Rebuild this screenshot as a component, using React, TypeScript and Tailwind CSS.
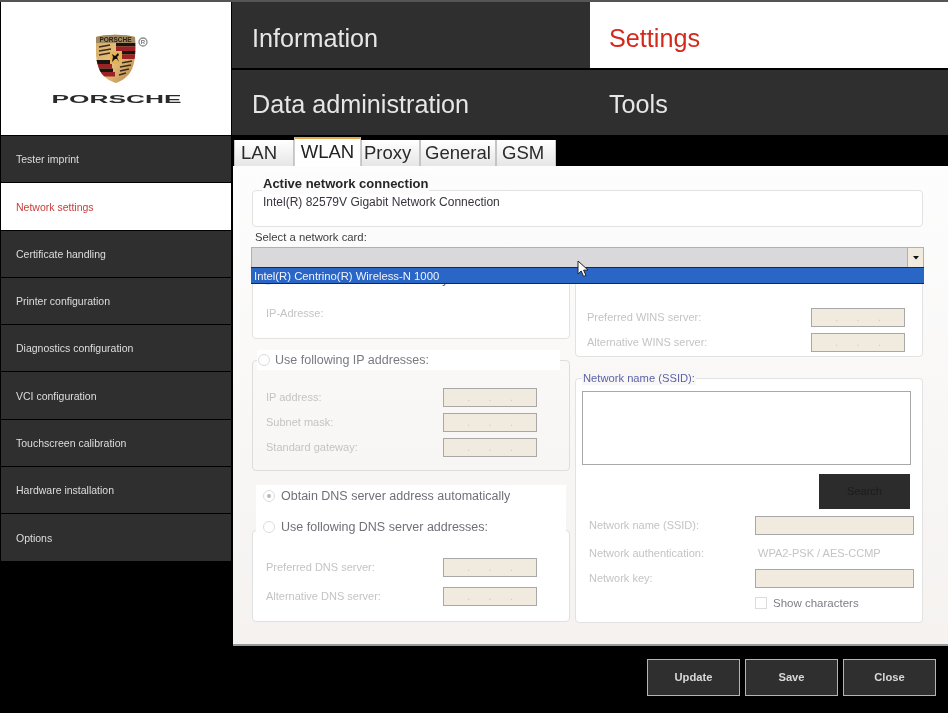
const FONT = "font-['Liberation_Sans',Arial,sans-serif]";

function Crest() {
  return (
    <svg width="60" height="52" viewBox="0 0 60 52" className="block">
      <defs>
        <linearGradient id="gold" x1="0" y1="0" x2="1" y2="1">
          <stop offset="0" stopColor="#d0ac68" />
          <stop offset="0.5" stopColor="#e8c07a" />
          <stop offset="1" stopColor="#b08244" />
        </linearGradient>
        <clipPath id="shield">
          <path d="M0 4 C10 1 29 1 39 4 C40 20 39 30 35 38 C31 45 25 48 20 50 C14 48 8 45 4 38 C0 30 -1 20 0 4 Z" />
        </clipPath>
      </defs>
      <g clipPath="url(#shield)">
        <rect x="-1" width="41" height="52" fill="url(#gold)" />
        <rect x="-1" y="1" width="41" height="9" fill="#a08a64" />
        <text x="19.5" y="8.5" textAnchor="middle" fontSize="6.5" fontWeight="700" fill="#2e2014" fontFamily="Liberation Sans">PORSCHE</text>
        <rect x="20" y="10" width="20" height="3.5" fill="#1c1410" />
        <rect x="20" y="13.5" width="20" height="4.5" fill="#9c2226" />
        <rect x="20" y="18" width="20" height="3.5" fill="#1c1410" />
        <rect x="25" y="21.5" width="15" height="4.5" fill="#9c2226" />
        <rect x="-1" y="27" width="15" height="4" fill="#1c1410" />
        <rect x="-1" y="31" width="17" height="4.5" fill="#9c2226" />
        <rect x="0" y="35.5" width="17" height="3.5" fill="#1c1410" />
        <rect x="2" y="39" width="17" height="4.5" fill="#9c2226" />
        <path d="M3 14 l11 -2 M3 18 l12 -2 M3 22 l11 -2" stroke="#3e2c1a" strokeWidth="1.7" />
        <path d="M25 30 l11 -2 M24 34 l11 -2 M24 38 l9 -2 M23 42 l7 -2" stroke="#3e2c1a" strokeWidth="1.7" />
        <rect x="14" y="18" width="12" height="13" fill="#e4b45a" />
        <path d="M16 29 l1 -5 l-1 -3 l3 2 l3 -3 l1 2 l-2 2 l2 5 l-2 -3 l-2 0 z" fill="#140e06" />
      </g>
      <circle cx="47" cy="9" r="4" fill="#fff" stroke="#8c8c8c" strokeWidth="1.3" />
      <text x="47" y="11.2" textAnchor="middle" fontSize="6" fontWeight="700" fill="#777" fontFamily="Liberation Sans">R</text>
    </svg>
  );
}

function Wordmark() {
  return (
    <svg width="131" height="10" viewBox="0 0 131 10" className="block">
      <text x="0.5" y="9" textLength="130" lengthAdjust="spacingAndGlyphs" fontSize="11" fontWeight="700" fill="#2a2a2a" fontFamily="Liberation Sans">
        PORSCHE
      </text>
    </svg>
  );
}

const menu = [
  "Tester imprint",
  "Network settings",
  "Certificate handling",
  "Printer configuration",
  "Diagnostics configuration",
  "VCI configuration",
  "Touchscreen calibration",
  "Hardware installation",
  "Options",
];

function Sidebar() {
  return (
    <div className="flex flex-col gap-px">
      {menu.map((m) => (
        <div
          key={m}
          className={
            m === "Network settings"
              ? "h-[46.3px] flex items-center pl-[15px] pt-[2px] text-[10.5px] bg-white text-[#c8403c]"
              : "h-[46.3px] flex items-center pl-[15px] pt-[2px] text-[10.5px] bg-[#2f2f2f] text-[#dedede]"
          }
        >
          {m}
        </div>
      ))}
    </div>
  );
}

function TopTile({ label, active, pt, pl }: { label: string; active?: boolean; pt: string; pl: string }) {
  return (
    <div
      className={
        active
          ? `flex items-center ${pl} ${pt} text-[25.2px] bg-white text-[#d42a1e]`
          : `flex items-center ${pl} ${pt} text-[25.2px] bg-[#2f2f2f] text-[#e6e6e6]`
      }
    >
      {label}
    </div>
  );
}

function Tab({ label, active, w, align = "justify-center" }: { label: string; active?: boolean; w: string; align?: string }) {
  return (
    <div
      className={
        active
          ? `${w} h-[29px] bg-white border-t-2 border-t-[#e0a848] border-x border-x-[#cfcfcf] flex items-start justify-center pt-px text-[18.5px] leading-[24px] text-[#222]`
          : `${w} h-[26px] bg-gradient-to-b from-white to-[#e6e6e6] border-x border-x-[#c4c4c4] flex items-center ${align} text-[18.5px] leading-[24px] text-[#2a2a2a]`
      }
    >
      {label}
    </div>
  );
}

function Field({ w = "w-[94px]", dots = true }: { w?: string; dots?: boolean }) {
  return (
    <div className={`${w} h-[19px] bg-[#f1ebdf] border border-[#a8a8a8] flex items-center justify-around px-[14px] text-[10px] text-[#cfc9bc] leading-none`}>
      {dots && (
        <>
          <span>.</span>
          <span>.</span>
          <span>.</span>
        </>
      )}
    </div>
  );
}

function Row({ label, className = "" }: { label: string; className?: string }) {
  return (
    <div className={`flex items-center justify-between ${className}`}>
      <span className="text-[11px] text-[#c4c4c4]">{label}</span>
      <Field />
    </div>
  );
}

function Radio({ checked }: { checked?: boolean }) {
  return (
    <span className="w-3 h-3 rounded-full border border-[#dcdcdc] bg-white flex items-center justify-center shrink-0">
      {checked && <span className="w-1 h-1 rounded-full bg-[#b8b8b8]" />}
    </span>
  );
}

function Cursor() {
  return (
    <svg width="13" height="18" viewBox="0 0 13 18" className="absolute left-[326px] top-[13px] z-20">
      <path d="M1 1 L1 14 L4.2 11 L6.6 16.4 L9 15.4 L6.6 10.2 L11 10 Z" fill="#fff" stroke="#222" strokeWidth="1" />
    </svg>
  );
}

function ActionButton({ label }: { label: string }) {
  return (
    <div className="w-[93px] h-[37px] bg-[#2f2f2f] border border-[#b4b4b4] flex items-center justify-center text-[11.2px] font-bold text-[#d8d8d8]">
      {label}
    </div>
  );
}

export default function App() {
  return (
    <div className={`w-[948px] h-[713px] bg-black overflow-hidden flex ${FONT} border-t-2 border-t-[#555] blur-[0.35px]`}>
      <div className="w-[230px] shrink-0 ml-px flex flex-col gap-px">
        <div className="h-[133px] bg-white flex flex-col items-center pt-[31px]">
          <div className="ml-[20px]"><Crest /></div>
          <div className="mt-[9px]"><Wordmark /></div>
        </div>
        <Sidebar />
      </div>

      <div className="flex-1 flex flex-col">
        <div className="grid grid-cols-2 grid-rows-[66px_65px] gap-y-[2px] ml-px w-[716px]">
          <TopTile label="Information" pt="pt-[8px]" pl="pl-[20px]" />
          <TopTile label="Settings" active pt="pt-[8px]" pl="pl-[19px]" />
          <TopTile label="Data administration" pt="pt-[5px]" pl="pl-[20px]" />
          <TopTile label="Tools" pt="pt-[5px]" pl="pl-[19px]" />
        </div>

        <div className="h-[29px] mt-[2px] ml-[3px] flex items-end">
          <Tab label="LAN" w="w-[60px]" align="justify-start pl-[6px]" />
          <Tab label="WLAN" active w="w-[67px]" />
          <Tab label="Proxy" w="w-[59px]" align="justify-start pl-[2px]" />
          <Tab label="General" w="w-[76px]" />
          <Tab label="GSM" w="w-[60px]" align="justify-start pl-[5px]" />
        </div>

        <div className="h-[480px] ml-[2px] bg-gradient-to-b from-[#fdfdfd] to-[#f5f2f0] border-b-2 border-b-[#9a9a9a] pl-[19px] pr-[25px] pt-[24px]">
          <div className="relative h-[37px] bg-white border border-[#e2e2e2] rounded-[4px] pl-[10px] pt-[4px]">
            <span className="absolute left-[9px] top-[-17px] px-px bg-[#fcfcfc] text-[13px] font-bold text-[#262626]">
              Active network connection
            </span>
            <span className="block text-[12px] leading-[14px] text-[#3a3340]">Intel(R) 82579V Gigabit Network Connection</span>
          </div>

          <div className="mt-[2px] pl-[3px] text-[11.3px] leading-[14px] text-[#3c3c3c] h-[18px] pt-[1px]">Select a network card:</div>

          <div className="relative -ml-px -mr-px">
            <div className="h-[21px] bg-[#d9d9dc] border border-[#b0b0b0] flex justify-end">
              <div className="w-[16px] bg-[#f1ebdf] border-l border-[#b0b0b0] flex items-center justify-center">
                <svg width="6" height="4" viewBox="0 0 6 4"><path d="M0 0 H6 L3 3.5 Z" fill="#111" /></svg>
              </div>
            </div>
            <div className="absolute left-0 right-0 top-[20px] h-[17px] z-10 bg-[#2a66c6] border-y border-y-[#16284c] pl-[3px] text-[11.3px] leading-[17px] text-[#f0f4ff]">
              Intel(R) Centrino(R) Wireless-N 1000
            </div>
            <Cursor />
          </div>

          <div className="flex gap-[5px] mt-[6px]">
            <div className="w-[318px] shrink-0">
              <div className="relative h-[65px] bg-white border border-[#e2e2e2] rounded-[4px] pl-[13px] pt-[30px] text-[11px] text-[#c4c4c4]">
                <div className="absolute left-[9px] top-[-5px] flex items-center gap-px text-[12.3px] text-[#666]">
                  <Radio /> Obtain IP address automatically
                </div>
                IP-Adresse:
              </div>

              <div className="relative h-[111px] mt-[21px] border border-[#e0dcd8] rounded-[4px] pl-[13px] pr-[32px] pt-[27px] flex flex-col gap-[6px]">
                <div className="absolute left-[4px] right-[9px] top-[-11px] h-[20px] bg-white flex items-center gap-[5px] pl-px text-[12.5px] text-[#7a7a80]">
                  <Radio /> Use following IP addresses:
                </div>
                <Row label="IP address:" />
                <Row label="Subnet mask:" />
                <Row label="Standard gateway:" />
              </div>

              <div className="relative mx-[4px] mt-[14px] h-[46px] bg-white pl-[7px] pt-[2px] flex flex-col gap-[13px] text-[12.5px] text-[#70707a] leading-[18px]">
                <div className="flex items-center gap-[6px]"><Radio checked /> Obtain DNS server address automatically</div>
                <div className="flex items-center gap-[6px] relative z-10"><Radio /> Use following DNS server addresses:</div>
              </div>

              <div className="h-[92px] -mt-[1px] bg-white border border-[#e0e0e0] rounded-[4px] pl-[13px] pr-[32px] pt-[27px] flex flex-col gap-[10px]">
                <Row label="Preferred DNS server:" />
                <Row label="Alternative DNS server:" />
              </div>
            </div>

            <div className="flex-1">
              <div className="relative h-[83px] bg-white border border-[#e2e2e2] rounded-[4px] pl-[11px] pr-[17px] pt-[33px] flex flex-col gap-[6px]">
                <span className="absolute left-[9px] top-[-5px] text-[12.5px] text-[#666]">WINS</span>
                <Row label="Preferred WINS server:" />
                <Row label="Alternative WINS server:" />
              </div>

              <div className="relative h-[245px] mt-[21px] bg-white border border-[#e2e2e2] rounded-[4px] pl-[6px] pr-[11px] pt-[12px]">
                <span className="absolute left-[6px] top-[-8px] px-px bg-[#f8f7f6] text-[11.2px] leading-[14px] text-[#5b62a8]">Network name (SSID):</span>
                <div className="h-[74px] bg-white border border-[#a8a8a8]" />
                <div className="flex justify-end mt-[9px] mr-px">
                  <div className="w-[91px] h-[35px] bg-[#2c2c2c] flex items-center justify-center text-[11px] text-[#1c1c1c]">Search</div>
                </div>
                <div className="flex items-center mt-[7px] pl-[7px] -mr-[3px]">
                  <span className="w-[166px] text-[11px] text-[#c4c4c4]">Network name (SSID):</span>
                  <Field w="w-[159px]" dots={false} />
                </div>
                <div className="flex items-center mt-[11px] pl-[7px] h-[14px]">
                  <span className="w-[169px] text-[11px] text-[#c4c4c4]">Network authentication:</span>
                  <span className="text-[11px] text-[#c4c4c4]">WPA2-PSK / AES-CCMP</span>
                </div>
                <div className="flex items-center mt-[9px] pl-[7px] -mr-[3px]">
                  <span className="w-[166px] text-[11px] text-[#c4c4c4]">Network key:</span>
                  <Field w="w-[159px]" dots={false} />
                </div>
                <div className="flex items-center gap-[6px] mt-[8px] pl-[173px] text-[11.5px] leading-[14px] text-[#7d7d85]">
                  <span className="w-3 h-3 bg-white border border-[#dcdcdc]" />
                  Show characters
                </div>
              </div>
            </div>
          </div>
        </div>

        <div className="flex justify-end gap-[5px] pr-[12px] pt-[13px]">
          <ActionButton label="Update" />
          <ActionButton label="Save" />
          <ActionButton label="Close" />
        </div>
      </div>
    </div>
  );
}
